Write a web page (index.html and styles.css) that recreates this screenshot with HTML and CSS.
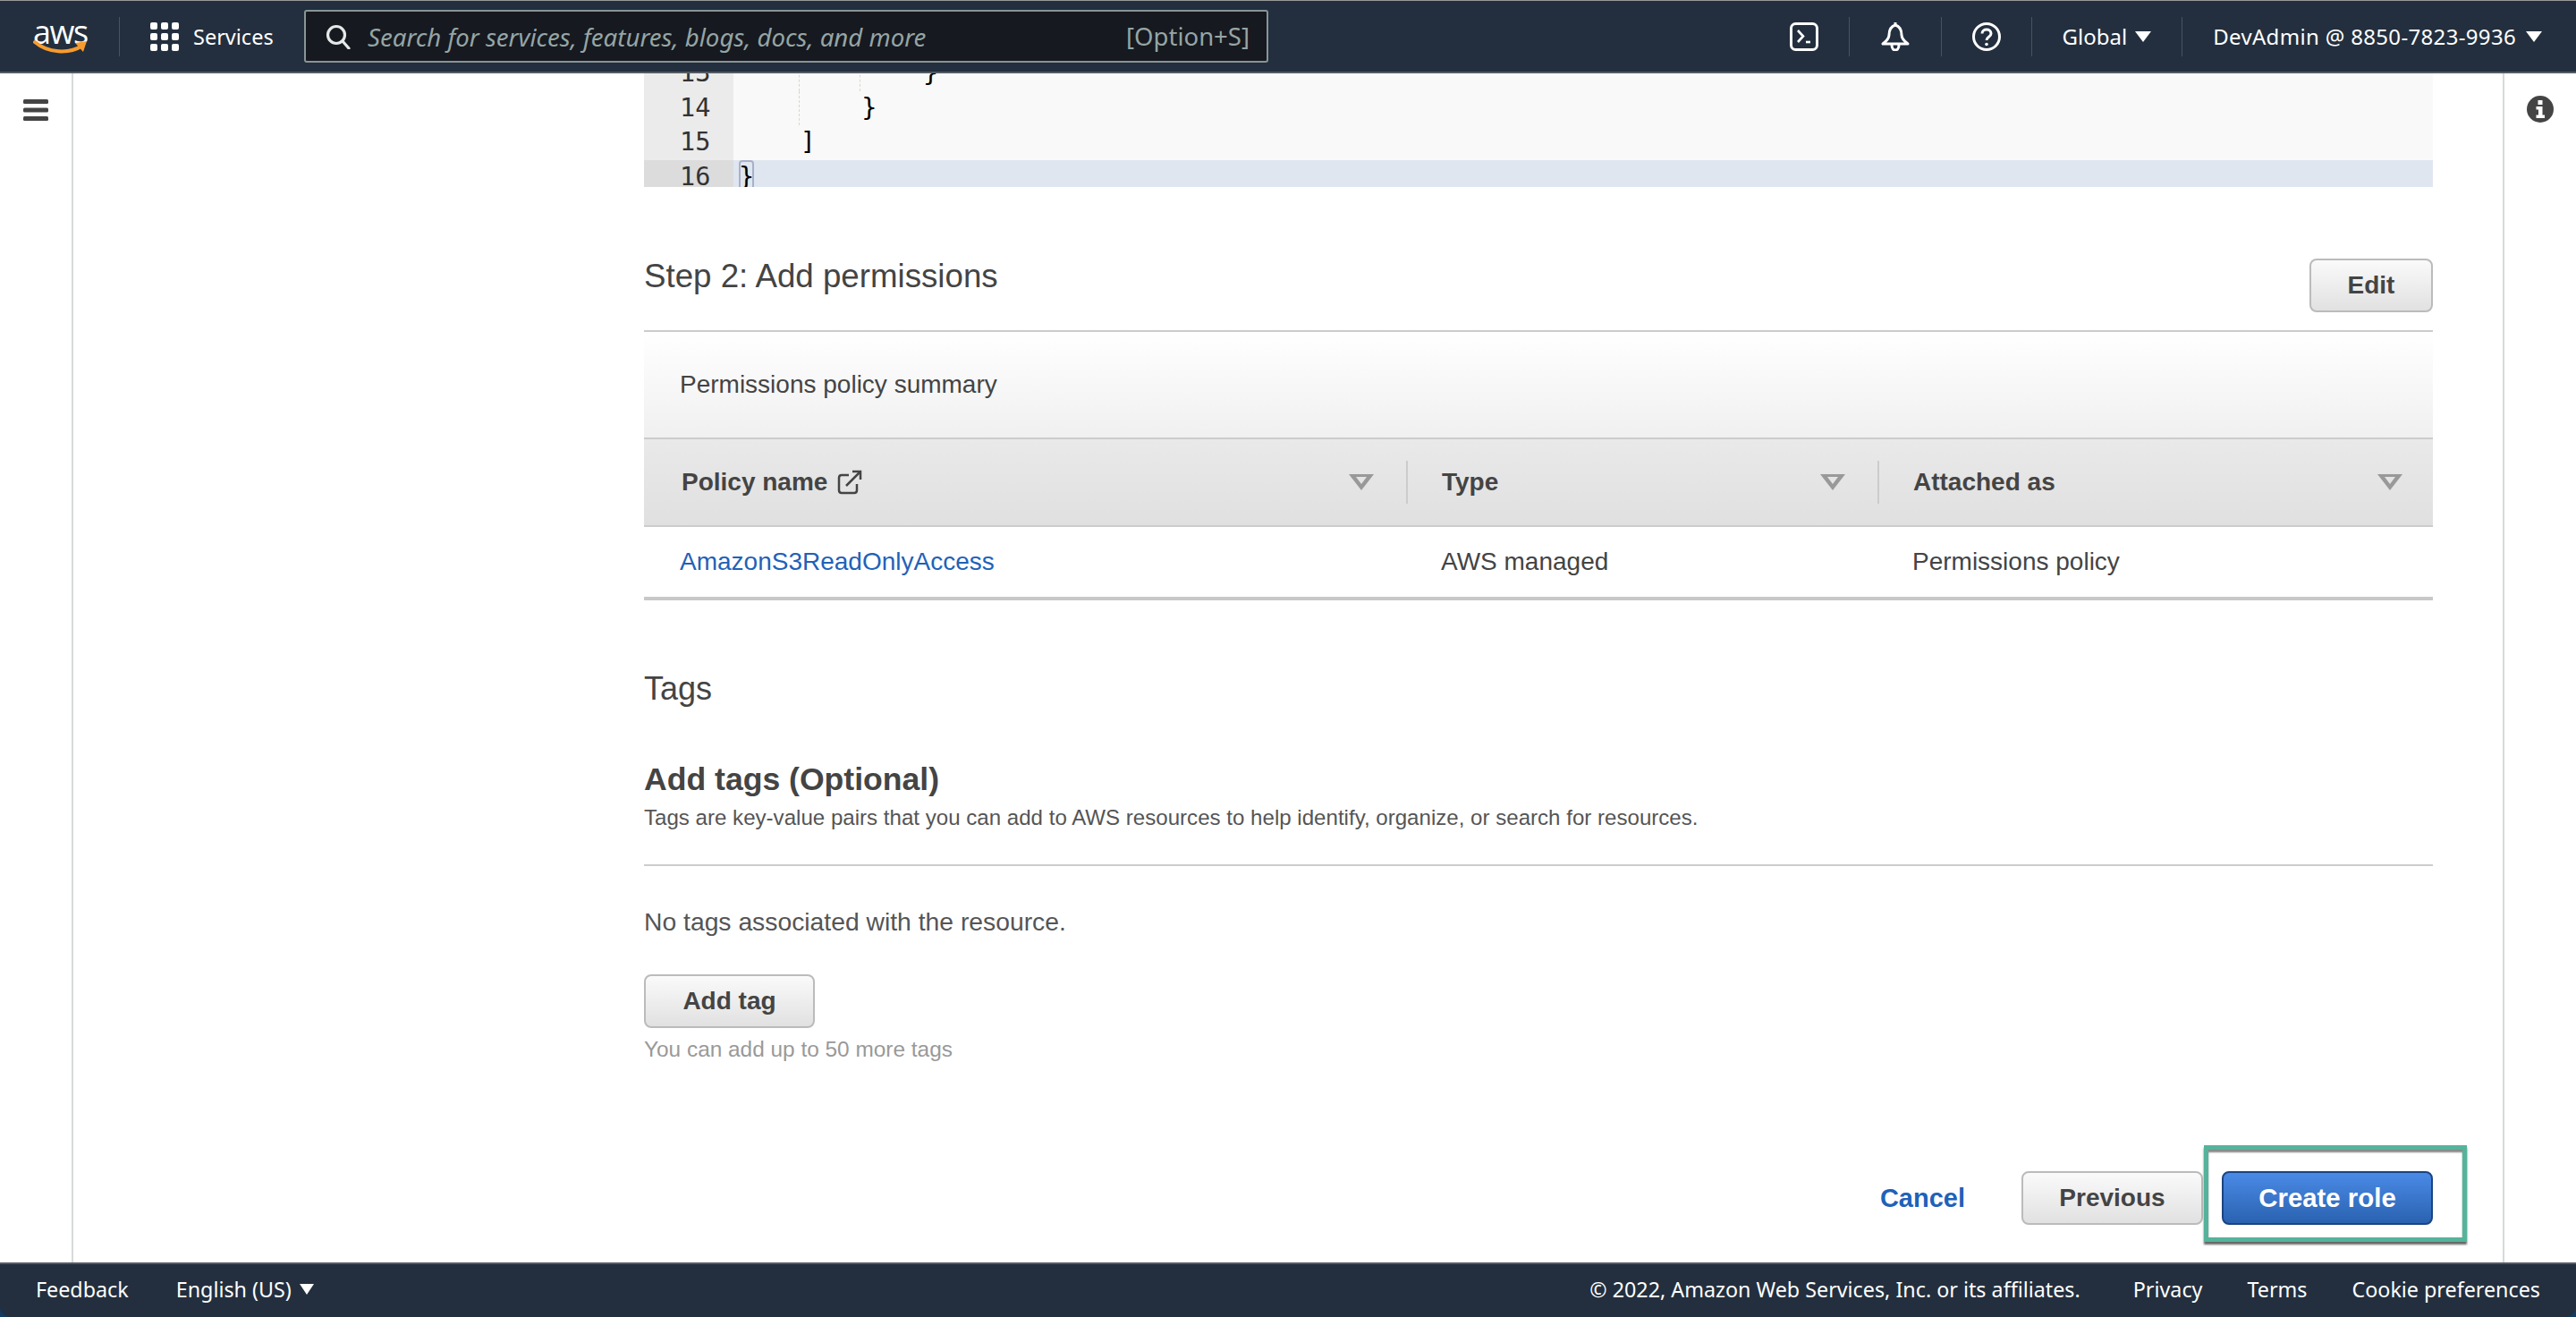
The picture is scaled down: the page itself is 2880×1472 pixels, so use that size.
FILE: index.html
```html
<!DOCTYPE html>
<html lang="en">
  <head>
    <meta charset="UTF-8" />
    <title>Create role</title>
    <link rel="stylesheet" href="styles.css">
  </head>
  <body>
    <header class="topbar">
      <div class="logo">
        <span class="logo-text">aws</span>
        <svg class="logo-smile" viewBox="0 0 62 20" width="62" height="20">
          <path d="M2 3 C16 15 40 17 55 7" fill="none" stroke="#f79b2e" stroke-width="4" stroke-linecap="round" />
          <path d="M47 4 L60 2 L56 14 Z" fill="#f79b2e" />
        </svg>
      </div>
      <span class="bar-sep sep-logo"></span>
      <svg class="grid-icon" viewBox="0 0 32 32" width="32" height="32" fill="#fff">
        <rect x="0" y="0" width="8" height="8" rx="2" />
        <rect x="12" y="0" width="8" height="8" rx="2" />
        <rect x="24" y="0" width="8" height="8" rx="2" />
        <rect x="0" y="12" width="8" height="8" rx="2" />
        <rect x="12" y="12" width="8" height="8" rx="2" />
        <rect x="24" y="12" width="8" height="8" rx="2" />
        <rect x="0" y="24" width="8" height="8" rx="2" />
        <rect x="12" y="24" width="8" height="8" rx="2" />
        <rect x="24" y="24" width="8" height="8" rx="2" />
      </svg>
      <span class="services">Services</span>
      <div class="search">
        <svg class="search-icon" viewBox="0 0 28 28" width="28" height="28" fill="none" stroke="#e6e8e8" stroke-width="3.2">
          <circle cx="12" cy="12" r="9.5" />
          <path d="M19 19 L26 27" stroke-linecap="round" />
        </svg>
        <span class="search-text">Search for services, features, blogs, docs, and more</span>
        <span class="search-key">[Option+S]</span>
      </div>
      <div class="bar-right">
        <svg class="bar-icon" viewBox="0 0 32 32" width="32" height="32" fill="none" stroke="#fff" stroke-width="3">
          <rect x="1.5" y="1.5" width="29" height="29" rx="5" />
          <path d="M9 9 L15 15.500 L9 22" stroke-width="2.600" />
          <path d="M18 22 L23 22" stroke-width="2.600" />
        </svg>
        <span class="bar-sep"></span>
        <svg class="bar-icon" viewBox="0 0 32 32" width="34" height="32" fill="none" stroke="#fff" stroke-width="3">
          <path d="M16 3 C10 5 9 10 9 14 C9 18 6 21 2 24 L30 24 C26 21 23 18 23 14 C23 10 22 5 16 3 Z" stroke-linejoin="round" />
          <path d="M16 0 L16 3" />
          <path d="M12 25 C12 33 20 33 20 25" />
        </svg>
        <span class="bar-sep"></span>
        <svg class="bar-icon" viewBox="0 0 32 32" width="32" height="32" fill="none" stroke="#fff" stroke-width="3">
          <circle cx="16" cy="16" r="14.500" />
          <path d="M11 12.500 C11 6.500 21 6.500 21 12.500 C21 16.500 16 16 16 20" />
          <circle cx="16" cy="24.500" r="1.800" fill="#fff" stroke="none" />
        </svg>
        <span class="bar-sep"></span>
        <span class="bar-menu">Global <i class="caret"></i></span>
        <span class="bar-sep"></span>
        <span class="bar-menu account">DevAdmin @ 8850-7823-9936 <i class="caret"></i></span>
      </div>
    </header>

    <div class="shell">
      <aside class="rail rail-left">
        <svg viewBox="0 0 28 24" width="28" height="24" fill="#444">
          <rect x="0" y="0" width="28" height="5" rx="1.500" />
          <rect x="0" y="9.500" width="28" height="5" rx="1.500" />
          <rect x="0" y="19" width="28" height="5" rx="1.500" />
        </svg>
      </aside>

      <main class="content">
        <!-- end of the trust policy editor, scrolled -->
        <div class="code">
          <div class="code-scroll">
            <div class="code-line"><span class="gutter">13</span><span class="code-text"><i class="guide g1"></i><i class="guide g2"></i>            }</span></div>
            <div class="code-line"><span class="gutter">14</span><span class="code-text"><i class="guide g1"></i>        }</span></div>
            <div class="code-line"><span class="gutter">15</span><span class="code-text">    ]</span></div>
            <div class="code-line code-active"><span class="gutter">16</span><span class="code-text"><i class="bracket"></i>}</span></div>
          </div>
        </div>

        <section class="step-head">
          <h2 class="title title-step">Step 2: Add permissions</h2>
          <button class="btn btn-edit">Edit</button>
        </section>

        <div class="panel-head">Permissions policy summary</div>
        <div class="table-head">
          <div class="th">
            <span class="th-label">Policy name
              <svg viewBox="0 0 28 28" width="28" height="28" fill="none" stroke="#444" stroke-width="2.500">
                <path d="M13 6 L5 6 C3 6 2 7 2 9 L2 23 C2 25 3 26 5 26 L19 26 C21 26 22 25 22 23 L22 16" />
                <path d="M10 18 L25 3" />
                <path d="M17 2 L26 2 L26 11" />
              </svg>
            </span>
            <i class="sort"></i>
          </div>
          <div class="th th-next"><span class="th-label">Type</span><i class="sort"></i></div>
          <div class="th th-next"><span class="th-label">Attached as</span><i class="sort"></i></div>
        </div>
        <div class="table-row">
          <a class="cell link" href="#">AmazonS3ReadOnlyAccess</a>
          <div class="cell">AWS managed</div>
          <div class="cell">Permissions policy</div>
        </div>

        <h2 class="title tags-title">Tags</h2>
        <h3 class="tags-sub">Add tags (Optional)</h3>
        <p class="tags-desc">Tags are key-value pairs that you can add to AWS resources to help identify, organize, or search for resources.</p>
        <p class="tags-empty">No tags associated with the resource.</p>
        <button class="btn btn-tag">Add tag</button>
        <p class="tags-hint">You can add up to 50 more tags</p>

        <div class="actions">
          <a class="cancel" href="#">Cancel</a>
          <button class="btn btn-prev">Previous</button>
          <button class="btn btn-primary">Create role</button>
          <span class="highlight"></span>
        </div>
      </main>

      <aside class="rail rail-right">
        <svg viewBox="0 0 30 30" width="30" height="30">
          <circle cx="15" cy="15" r="15" fill="#444" />
          <rect x="12.500" y="5" width="5" height="5" fill="#fff" />
          <path d="M10.500 12 L17.500 12 L17.500 21.500 L20 21.500 L20 25 L10.500 25 L10.500 21.500 L13 21.500 L13 15.500 L10.500 15.500 Z" fill="#fff" />
        </svg>
      </aside>
    </div>

    <footer class="bottombar">
      <span>Feedback</span>
      <span class="lang">English (US) <i class="caret"></i></span>
      <div class="foot-right">
        <span class="foot-copy">© 2022, Amazon Web Services, Inc. or its affiliates.</span>
        <span class="foot-link">Privacy</span>
        <span class="foot-link">Terms</span>
        <span class="foot-link">Cookie preferences</span>
      </div>
    </footer>
  </body>
</html>
```

FILE: styles.css
```css
html,
body {
  margin: 0;
  height: 100%;
}
body {
  display: flex;
  flex-direction: column;
  height: 1472px;
  overflow: hidden;
  background-color: #123a63;
  color: #444;
  font-family: "Liberation Sans", Arial, sans-serif;
  font-size: 28px;
}

/* top bar */
.topbar {
  display: flex;
  align-items: center;
  flex: none;
  box-sizing: border-box;
  height: 82px;
  padding: 0 38px 0 37px;
  background-color: #232f3e;
  border-top: 1px solid #9a9a9a;
  border-bottom: 2px solid #545b64;
  color: #fff;
  font-family: "Noto Sans", sans-serif;
  font-size: 24px;
}
.logo {
  position: relative;
  width: 62px;
  height: 40px;
  margin-top: 2px;
}
.logo-text {
  display: block;
  font-family: "Open Sans", sans-serif;
  font-size: 36px;
  line-height: 28px;
  letter-spacing: -1.500px;
}
.logo-smile {
  position: absolute;
  left: 0;
  bottom: -2px;
}
.bar-sep {
  width: 1px;
  height: 44px;
  background-color: #48535f;
}
.sep-logo {
  margin: 0 34px;
}
.grid-icon {
  flex: none;
}
.services {
  margin-left: 16px;
  width: 124px;
  font-size: 23.500px;
}
.search {
  display: flex;
  align-items: center;
  box-sizing: border-box;
  width: 1078px;
  height: 59px;
  padding: 0 19px 0 22px;
  background-color: #16191f;
  border: 2px solid #879596;
  border-radius: 3px;
}
.search-text {
  margin-left: 19px;
  flex: 1;
  font-style: italic;
  font-size: 27.600px;
  color: #95a5a6;
}
.search-key {
  font-size: 27.500px;
  color: #95a5a6;
}
.bar-right {
  display: flex;
  align-items: center;
  margin-left: auto;
  gap: 34px;
}
.bar-menu {
  display: flex;
  align-items: center;
  gap: 9px;
}
.account {
  gap: 11px;
  letter-spacing: 0.330px;
}
.caret {
  display: inline-block;
  width: 0;
  height: 0;
  border-left: 9px solid transparent;
  border-right: 9px solid transparent;
  border-top: 12px solid #fff;
}

/* page frame */
.shell {
  display: flex;
  flex: 1;
  min-height: 0;
  background-color: #fff;
}
.rail {
  flex: none;
  display: flex;
  justify-content: center;
  box-sizing: border-box;
  width: 82px;
}
.rail-left {
  padding-top: 29px;
  margin-right: 638px;
  border-right: 2px solid #d5dbdb;
}
.rail-right {
  padding-top: 25px;
  margin-left: 78px;
  border-left: 2px solid #d5dbdb;
}
.content {
  display: flex;
  flex-direction: column;
  width: 2000px;
  flex: none;
}

/* editor */
.code {
  height: 127px;
  overflow: hidden;
  background-color: #f9f9f9;
  font-family: "DejaVu Sans Mono", monospace;
  font-size: 28.500px;
}
.code-scroll {
  margin-top: -19px;
}
.code-line {
  display: flex;
  height: 38.500px;
  line-height: 38.500px;
}
.gutter {
  flex: none;
  box-sizing: border-box;
  width: 100px;
  padding-left: 40px;
  background-color: #ebebeb;
  color: #333;
}
.code-text {
  position: relative;
  flex: 1;
  padding-left: 6px;
  color: #000;
  white-space: pre;
}
.code-active {
  background-color: #e0e6f0;
}
.code-active .gutter {
  background-color: #dcdcdc;
}
.guide {
  position: absolute;
  top: 0;
  bottom: 0;
  border-left: 1px dashed #d8d8c8;
}
.g1 {
  left: 73px;
}
.g2 {
  left: 141px;
}
.bracket {
  position: absolute;
  left: 6px;
  top: 0;
  width: 17px;
  height: 38px;
  box-sizing: border-box;
  border: 2px solid #a8b0c8;
  border-radius: 4px;
}

/* step section */
.step-head {
  display: flex;
  justify-content: space-between;
  align-items: flex-start;
  height: 162px;
  padding-top: 80px;
  box-sizing: border-box;
  border-bottom: 2px solid #ccc;
}
.title {
  margin: 0;
  font-size: 36px;
  font-weight: 400;
  line-height: 40px;
  color: #444;
}
.title-step {
  font-size: 36.700px;
}
.btn {
  box-sizing: border-box;
  height: 60px;
  padding: 0;
  background: linear-gradient(#fafafa, #e1e1e1);
  border: 2px solid #bbb;
  border-radius: 8px;
  color: #444;
  font-family: "Liberation Sans", Arial, sans-serif;
  font-size: 28px;
  font-weight: 700;
}
.btn-edit {
  width: 138px;
}
.panel-head {
  box-sizing: border-box;
  height: 120px;
  padding: 0 40px;
  display: flex;
  align-items: center;
  background: linear-gradient(#fff, #f0f0f0);
  border-bottom: 2px solid #ccc;
  font-size: 28px;
}
.table-head,
.table-row {
  display: grid;
  grid-template-columns: 852px 527px 621px;
}
.table-head {
  box-sizing: border-box;
  height: 98px;
  background: linear-gradient(#e9e9e9, #e0e0e0);
  border-bottom: 2px solid #ccc;
  align-items: center;
}
.th {
  display: flex;
  align-items: center;
  justify-content: space-between;
  box-sizing: border-box;
  height: 48px;
  padding: 0 36px 0 42px;
}
.th-next {
  border-left: 2px solid #ccc;
  padding-left: 38px;
}
.th:last-child {
  padding-right: 34px;
}
.th-label {
  display: flex;
  align-items: center;
  gap: 11px;
  font-weight: 700;
}
.sort {
  width: 0;
  height: 0;
  border-left: 14px solid transparent;
  border-right: 14px solid transparent;
  border-top: 18px solid #999;
  position: relative;
}
.sort::after {
  content: "";
  position: absolute;
  left: -6px;
  top: -15px;
  border-left: 6px solid transparent;
  border-right: 6px solid transparent;
  border-top: 8px solid #e4e4e4;
}
.table-row {
  box-sizing: border-box;
  height: 82px;
  align-items: center;
  border-bottom: 4px solid #c8c8c8;
}
.cell {
  padding-left: 40px;
}
.cell + .cell {
  padding-left: 39px;
}
.link,
.cancel {
  color: #1f62b8;
  text-decoration: none;
}

/* tags */
.tags-title {
  margin-top: 79px;
}
.tags-sub {
  margin: 60px 0 0;
  font-size: 35.600px;
  line-height: 42px;
  font-weight: 700;
}
.tags-desc {
  margin: 7px 0 0;
  padding-bottom: 37px;
  border-bottom: 2px solid #ccc;
  font-size: 24.100px;
  line-height: 30px;
  color: #555;
}
.tags-empty {
  margin: 44px 0 0;
  font-size: 28.300px;
  line-height: 36px;
  color: #555;
}
.btn-tag {
  align-self: flex-start;
  width: 191px;
  margin-top: 41px;
}
.tags-hint {
  margin: 9px 0 0;
  font-size: 24.400px;
  line-height: 30px;
  color: #999;
}
.actions {
  position: relative;
  display: flex;
  justify-content: flex-end;
  align-items: center;
  margin-top: 121px;
}
.cancel {
  margin-right: 63px;
  font-size: 29px;
  font-weight: 700;
}
.btn-prev {
  width: 203px;
  margin-right: 21px;
}
.btn-primary {
  width: 236px;
  background: linear-gradient(#4a8ae6, #2a62b0);
  border-color: #1b4480;
  color: #fff;
  font-size: 29.400px;
}
.highlight {
  position: absolute;
  right: -38px;
  top: -29px;
  width: 294px;
  height: 108px;
  box-sizing: border-box;
  border: 5px solid #55b39b;
  box-shadow: 0 3px 2px #666, inset 0 3px 2px #888;
}

/* footer */
.bottombar {
  display: flex;
  align-items: center;
  flex: none;
  box-sizing: border-box;
  height: 61px;
  padding: 0 40px 3px;
  background-color: #232f3e;
  border-top: 2px solid #545b64;
  border-radius: 0 0 12px 12px;
  color: #fff;
  font-family: "Noto Sans", sans-serif;
  font-size: 23.300px;
}
.lang {
  display: flex;
  align-items: center;
  gap: 9px;
  margin-left: 53px;
}
.lang .caret {
  border-left-width: 8px;
  border-right-width: 8px;
}
.foot-right {
  display: flex;
  margin-left: auto;
}
.foot-copy {
  margin-right: 9px;
}
.foot-link {
  margin-left: 50px;
}
```
